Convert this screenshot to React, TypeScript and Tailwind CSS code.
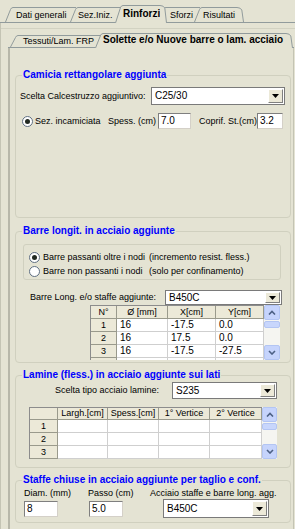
import React from 'react';

const BG = '#e4e3d3';
const TAB_LINE = '#919b9c';

const TabLeft = ({ h }: { h: number }) => (
  <svg width={8} height={h} className="block shrink-0">
    <polygon points={`0,${h} 6,2 8,0 8,${h}`} fill={BG} />
    <path d={`M0.5 ${h} L5.5 2.5 Q6.3 0.5 8 0.5`} fill="none" stroke={TAB_LINE} />
  </svg>
);

const TabRight = ({ h }: { h: number }) => (
  <svg width={7} height={h} className="block shrink-0">
    <polygon points={`0,0 3,0 5,2.5 7,${h} 0,${h}`} fill={BG} />
    <path d={`M0 0.5 Q3.5 0.5 4.8 3 L6.5 ${h}`} fill="none" stroke={TAB_LINE} />
  </svg>
);

const Radio = ({ checked = false }: { checked?: boolean }) => (
  <span className="flex items-center justify-center w-[11px] h-[11px] rounded-full border border-[#5f6f82] bg-white shrink-0">
    {checked && <span className="w-[5px] h-[5px] rounded-full bg-[#222a22]" />}
  </span>
);

const DropArrow = () => (
  <svg width={7} height={4} className="block">
    <polygon points="0,0 7,0 3.5,4" fill="#000" />
  </svg>
);

const Select = ({ value, className }: { value: string; className: string }) => (
  <div className={`flex bg-white border border-[#7a7a7a] shrink-0 ${className}`}>
    <span className="flex-1 flex items-center pl-[3px] text-[10px]">{value}</span>
    <span className="w-[15px] m-px flex items-center justify-center bg-[#ece9d8] border border-white border-r-[#808080] border-b-[#808080]">
      <DropArrow />
    </span>
  </div>
);

const TextBox = ({ value, className }: { value: string; className: string }) => (
  <div
    className={`flex items-center pl-[2px] bg-white border border-[#7f7f7f] border-r-[#d4d0c8] border-b-[#d4d0c8] text-[10px] shrink-0 ${className}`}
  >
    {value}
  </div>
);

const Chevron = ({ up }: { up: boolean }) => (
  <svg width={8} height={5} className="block">
    <path
      d={up ? 'M1 4.5 L4 1.5 L7 4.5' : 'M1 1 L4 4 L7 1'}
      fill="none"
      stroke="#4d6185"
      strokeWidth={1.6}
    />
  </svg>
);

const ScrollBar = ({ className }: { className: string }) => (
  <div className={`flex flex-col bg-[#f5f5f1] shrink-0 ${className}`}>
    <div className="h-[15px] flex items-center justify-center bg-[#c6d4fc] border border-[#b3c5f3] rounded-[2px]">
      <Chevron up />
    </div>
    <div className="h-[7px] mt-px bg-[#c8d6fc] border border-[#b3c5f3] rounded-[2px]" />
    <div className="flex-1" />
    <div className="h-[15px] flex items-center justify-center bg-[#c6d4fc] border border-[#b3c5f3] rounded-[2px]">
      <Chevron up={false} />
    </div>
  </div>
);

// last row is only partly visible under the header, so it shows no text
const barre = [
  { id: 'r1', n: '1', d: '16', x: '-17.5', y: '0.0' },
  { id: 'r2', n: '2', d: '16', x: '17.5', y: '0.0' },
  { id: 'r3', n: '3', d: '16', x: '-17.5', y: '-27.5' },
  { id: 'r4', n: '', d: '', x: '', y: '' },
];

export default function App() {
  return (
    <div className="w-[295px] h-[529px] overflow-hidden bg-[#e4e3d3] text-[9px] text-black leading-none font-['Liberation_Sans',Arial,sans-serif]">
      {/* Outer tabs */}
      <div className="flex items-end h-[23px] pl-[5px] border-b border-[#919b9c]">
        <div className="flex h-[15px]">
          <TabLeft h={15} />
          <div className="w-[63px] pl-[3px] border-t border-[#919b9c] flex items-center whitespace-nowrap">Dati generali</div>
        </div>
        <div className="flex h-[15px] -ml-[6px]">
          <TabLeft h={15} />
          <div className="w-[43px] border-t border-[#919b9c] flex items-center whitespace-nowrap">Sez.Iniz.</div>
        </div>
        <div className="flex h-[18px] -ml-[6px] -mb-px z-10">
          <TabLeft h={18} />
          <div className="w-[37px] border-t border-[#919b9c] bg-[#e4e3d3] flex items-center pb-[2px] text-[10px] font-bold whitespace-nowrap">
            Rinforzi
          </div>
          <TabRight h={18} />
        </div>
        <div className="flex h-[15px] -ml-[7px]">
          <div className="w-[40px] pl-[10px] border-t border-[#919b9c] flex items-center whitespace-nowrap">Sforzi</div>
        </div>
        <div className="flex h-[15px] -ml-[6px]">
          <TabLeft h={15} />
          <div className="w-[35px] pl-px border-t border-[#919b9c] bg-[#e4e3d3] flex items-center whitespace-nowrap">Risultati</div>
          <TabRight h={15} />
        </div>
      </div>

      {/* Outer page */}
      <div className="h-[506px] border-l border-[#c4c4b4]">
        <div className="h-[6px] border-b border-[#d2d2c2]" />
        <div className="pl-[7px] pr-px">
          {/* Inner tabs */}
          <div className="flex items-end h-[19px] pl-[2px] border-b border-[#919b9c]">
            <div className="flex h-[12px]">
              <TabLeft h={12} />
              <div className="w-[83px] pl-[5px] border-t border-[#919b9c] flex items-center whitespace-nowrap">Tessuti/Lam. FRP</div>
            </div>
            <div className="flex h-[15px] -ml-[6px] -mb-px z-10">
              <TabLeft h={15} />
              <div className="w-[183px] border-t border-[#919b9c] bg-[#e4e3d3] flex items-center pb-[2px] text-[10px] font-bold whitespace-nowrap">
                Solette e/o Nuove barre o lam. acciaio
              </div>
              <TabRight h={15} />
            </div>
          </div>

          {/* Inner page */}
          <div className="h-[481px] border-l-2 border-l-[#b7b7a9] border-r border-r-[#c4c4b4] pl-[5px] pr-[2px] pt-[21px]">
            {/* Camicia */}
            <fieldset className="w-[276px] h-[149px] min-w-0 p-0 m-0 border border-[#d0d0bf] rounded-[4px]">
              <legend className="ml-[6px] px-px text-[10px] leading-[12px] font-bold text-[#0000ff]">Camicia rettangolare aggiunta</legend>
              <div className="flex items-center mt-[6px] pl-[4px]">
                <span className="w-[131px] whitespace-nowrap">Scelta Calcestruzzo aggiuntivo:</span>
                <Select value="C25/30" className="w-[134px] h-[18px]" />
              </div>
              <div className="flex items-center mt-[8px] pl-[6px] h-[16px]">
                <Radio checked />
                <span className="ml-[2px] w-[73px] whitespace-nowrap">Sez. incamiciata</span>
                <span className="w-[50px] whitespace-nowrap">Spess. (cm)</span>
                <TextBox value="7.0" className="w-[33px] h-[16px]" />
                <span className="ml-[8px] w-[58px] whitespace-nowrap">Coprif. St.(cm)</span>
                <TextBox value="3.2" className="w-[26px] h-[16px]" />
              </div>
            </fieldset>

            {/* Barre longit. */}
            <fieldset className="mt-[7px] w-[276px] h-[138px] min-w-0 p-0 m-0 border border-[#d0d0bf] rounded-[4px]">
              <legend className="ml-[6px] px-px text-[10px] leading-[12px] font-bold text-[#0000ff]">Barre longit. in acciaio aggiunte</legend>
              <div className="mt-[7px] ml-[7px] w-[258px] h-[36px] pt-[5px] pl-[5px] border border-[#d0d0bf] rounded-[3px]">
                <div className="flex items-center h-[14px]">
                  <Radio checked />
                  <span className="ml-[3px] w-[106px] whitespace-nowrap">Barre passanti oltre i nodi</span>
                  <span className="whitespace-nowrap">(incremento resist. fless.)</span>
                </div>
                <div className="flex items-center h-[14px]">
                  <Radio />
                  <span className="ml-[3px] w-[106px] whitespace-nowrap">Barre non passanti i nodi</span>
                  <span className="whitespace-nowrap">(solo per confinamento)</span>
                </div>
              </div>
              <div className="flex items-center mt-[10px] pl-[14px] h-[15px]">
                <span className="w-[135px] whitespace-nowrap">Barre Long. e/o staffe aggiunte:</span>
                <Select value="B450C" className="w-[117px] h-[15px]" />
              </div>
              <div className="flex ml-[74px] h-[55px] overflow-hidden">
                <div className="w-[174px] border-t border-l border-[#8c8c8c]">
                  <div className="flex h-[13px] bg-[#ece9d8]">
                    <div className="w-[26px] flex items-center justify-center border-r border-b border-[#9a9a8c]">N°</div>
                    <div className="w-[51px] flex items-center justify-center border-r border-b border-[#9a9a8c]">Ø [mm]</div>
                    <div className="w-[48px] flex items-center justify-center border-r border-b border-[#9a9a8c]">X[cm]</div>
                    <div className="w-[48px] flex items-center justify-center border-r border-b border-[#9a9a8c]">Y[cm]</div>
                  </div>
                  {barre.map((r) => (
                    <div key={r.id} className="flex h-[13px]">
                      <div className="w-[26px] flex items-center justify-center bg-[#ece9d8] border-r border-b border-[#9a9a8c]">{r.n}</div>
                      <div className="w-[51px] flex items-center pl-[3px] bg-white border-r border-b border-[#cfcfcf] text-[10px]">{r.d}</div>
                      <div className="w-[48px] flex items-center pl-[3px] bg-white border-r border-b border-[#cfcfcf] text-[10px]">{r.x}</div>
                      <div className="w-[48px] flex items-center pl-[3px] bg-white border-r border-b border-[#cfcfcf] text-[10px]">{r.y}</div>
                    </div>
                  ))}
                </div>
                <ScrollBar className="w-[16px] h-[55px]" />
              </div>
            </fieldset>

            {/* Lamine */}
            <fieldset className="mt-[6px] w-[276px] h-[99px] min-w-0 p-0 m-0 border border-[#d0d0bf] rounded-[4px]">
              <legend className="ml-[6px] px-px text-[10px] leading-[12px] font-bold text-[#0000ff]">Lamine (fless.) in acciaio aggiunte sui lati</legend>
              <div className="flex items-center mt-px pl-[39px] h-[17px]">
                <span className="w-[117px] whitespace-nowrap">Scelta tipo acciaio lamine:</span>
                <Select value="S235" className="w-[105px] h-[17px]" />
              </div>
              <div className="flex mt-[8px] ml-[13px] h-[52px] overflow-hidden">
                <div className="w-[233px] border-t border-l border-[#8c8c8c]">
                  <div className="flex h-[12px] bg-[#ece9d8]">
                    <div className="w-[28px] border-r border-b border-[#9a9a8c]" />
                    <div className="w-[50px] flex items-center justify-center border-r border-b border-[#9a9a8c] whitespace-nowrap">Largh.[cm]</div>
                    <div className="w-[51px] flex items-center justify-center border-r border-b border-[#9a9a8c] whitespace-nowrap">Spess.[cm]</div>
                    <div className="w-[51px] flex items-center justify-center border-r border-b border-[#9a9a8c] whitespace-nowrap">1° Vertice</div>
                    <div className="w-[52px] flex items-center justify-center border-r border-b border-[#9a9a8c] whitespace-nowrap">2° Vertice</div>
                  </div>
                  {['1', '2', '3'].map((n) => (
                    <div key={n} className="flex h-[13px]">
                      <div className="w-[28px] flex items-center justify-center bg-[#ece9d8] border-r border-b border-[#9a9a8c]">{n}</div>
                      <div className="w-[50px] bg-white border-r border-b border-[#cfcfcf]" />
                      <div className="w-[51px] bg-white border-r border-b border-[#cfcfcf]" />
                      <div className="w-[51px] bg-white border-r border-b border-[#cfcfcf]" />
                      <div className="w-[52px] bg-white border-r border-b border-[#cfcfcf]" />
                    </div>
                  ))}
                </div>
                <ScrollBar className="w-[15px] h-[52px]" />
              </div>
            </fieldset>

            {/* Staffe */}
            <fieldset className="mt-[6px] w-[276px] h-[49px] min-w-0 p-0 m-0 border border-[#d0d0bf] rounded-[4px]">
              <legend className="ml-[6px] px-px text-[10px] leading-[12px] font-bold text-[#0000ff]">Staffe chiuse in acciaio aggiunte per taglio e conf.</legend>
              <div className="flex mt-[2px] pl-[8px]">
                <div className="w-[64px]">
                  <div className="h-[11px] flex items-center whitespace-nowrap">Diam. (mm)</div>
                  <TextBox value="8" className="mt-[2px] w-[34px] h-[16px]" />
                </div>
                <div className="w-[62px]">
                  <div className="h-[11px] flex items-center whitespace-nowrap">Passo (cm)</div>
                  <TextBox value="5.0" className="mt-[2px] ml-px w-[34px] h-[16px]" />
                </div>
                <div>
                  <div className="h-[11px] flex items-center whitespace-nowrap">Acciaio staffe e barre long. agg.</div>
                  <Select value="B450C" className="ml-[13px] w-[106px] h-[19px]" />
                </div>
              </div>
            </fieldset>
          </div>
        </div>
      </div>
    </div>
  );
}
